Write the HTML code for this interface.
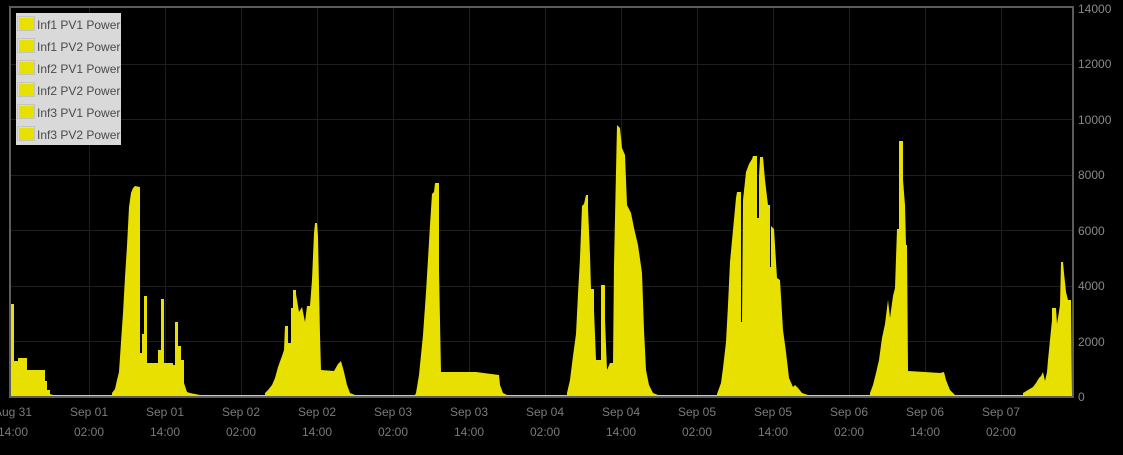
<!DOCTYPE html>
<html><head><meta charset="utf-8"><style>
html,body{margin:0;padding:0;background:#000;width:1123px;height:455px;overflow:hidden}
svg text{font-family:"Liberation Sans",sans-serif;font-size:12px}
</style></head><body>
<svg width="1123" height="455" viewBox="0 0 1123 455" xmlns="http://www.w3.org/2000/svg">
<g stroke="#1e1e1e" stroke-width="1">
<line x1="10" y1="341.5" x2="1072" y2="341.5"/><line x1="10" y1="286.5" x2="1072" y2="286.5"/>
<line x1="10" y1="230.5" x2="1072" y2="230.5"/><line x1="10" y1="175.5" x2="1072" y2="175.5"/>
<line x1="10" y1="119.5" x2="1072" y2="119.5"/><line x1="10" y1="64.5" x2="1072" y2="64.5"/>
<line x1="89.5" y1="7" x2="89.5" y2="396"/><line x1="165.5" y1="7" x2="165.5" y2="396"/>
<line x1="241.5" y1="7" x2="241.5" y2="396"/><line x1="317.5" y1="7" x2="317.5" y2="396"/>
<line x1="393.5" y1="7" x2="393.5" y2="396"/><line x1="469.5" y1="7" x2="469.5" y2="396"/>
<line x1="545.5" y1="7" x2="545.5" y2="396"/><line x1="621.5" y1="7" x2="621.5" y2="396"/>
<line x1="697.5" y1="7" x2="697.5" y2="396"/><line x1="773.5" y1="7" x2="773.5" y2="396"/>
<line x1="849.5" y1="7" x2="849.5" y2="396"/><line x1="925.5" y1="7" x2="925.5" y2="396"/>
<line x1="1001.5" y1="7" x2="1001.5" y2="396"/>
</g>
<path fill="#e8e000" d="M10,396 L10,326 L11,326 L11,304 L14,304 L14,361 L18,361 L18,358 L27,358 L27,370 L45,370 L45,381 L47,381 L47,390 L50,390 L50,394 L53,395
L112,395 L112,393 L115,389 L117,380 L119,372 L121,342 L123,313 L125,277 L127,246 L129,207 L131,193 L133,188 L135,186 L140,187 L140,353 L142,353 L142,334 L144,334 L144,296 L147,296 L147,363 L158,363 L158,350 L161,350 L161,299 L164,299 L164,363 L173,363 L173,365 L175,365 L175,322 L178,322 L178,346 L181,346 L181,360 L184,360 L184,383 L187,392 L190,393 L200,395
L265,395 L265,393 L268,390 L272,385 L275,378 L278,367 L282,356 L284,350 L285,326 L288,326 L288,343 L291,343 L291,308 L293,308 L293,290 L296,290 L296,294 L299,312 L302,307 L305,322 L307,306 L310,306 L312,280 L314,233 L315,223 L317,223 L318,236 L320,335 L321,370 L334,371 L338,364 L341,361 L344,372 L347,385 L350,393 L355,395
L415,395 L416,393 L419,375 L421,355 L423,335 L426,292 L428,259 L430,225 L432,194 L434,192 L435,183 L439,183 L439,270 L441,372 L476,372 L499,375 L500,385 L503,393 L507,395
L567,395 L567,393 L570,380 L573,356 L576,334 L578,294 L580,258 L582,206 L584,204 L586,195 L588,195 L588,208 L590,255 L591,289 L594,289 L594,310 L596,360 L601,360 L601,285 L605,285 L605,320 L607,370 L610,363 L613,363 L614,265 L617,125 L620,128 L622,148 L625,155 L627,205 L631,213 L634,228 L638,245 L642,273 L644,330 L646,370 L649,385 L653,393 L658,395
L717,395 L717,394 L721,383 L723,368 L726,342 L728,305 L730,262 L733,230 L736,198 L737,192 L741,192 L741,322 L742,322 L743,200 L746,172 L749,164 L752,159 L753,156 L757,156 L757,218 L759,218 L759,176 L760,157 L763,157 L765,180 L768,205 L770,205 L770,267 L771,267 L771,226 L774,229 L777,278 L780,280 L783,330 L786,352 L789,378 L793,387 L795,385 L798,388 L802,393 L808,395
L870,395 L870,393 L873,385 L876,373 L879,360 L882,338 L885,324 L888,300 L890,318 L893,296 L895,288 L897,229 L899,229 L899,141 L903,141 L903,180 L905,205 L906,245 L907,245 L908,371 L925,372 L940,373 L944,372 L946,380 L950,390 L955,395
L1023,395 L1023,393 L1028,390 L1033,387 L1036,383 L1039,378 L1041,376 L1043,372 L1045,381 L1047,372 L1048,360 L1050,340 L1052,320 L1052,308 L1056,308 L1057,324 L1060,305 L1061,262 L1063,262 L1064,273 L1066,292 L1068,300 L1071,300 L1072,396 Z"/>
<g fill="none" stroke="#5c5c5c" stroke-width="2">
<rect x="10" y="7" width="1063" height="390"/>
</g>
<g fill="#888">
<text x="1078" y="13">14000</text><text x="1078" y="68">12000</text>
<text x="1078" y="124">10000</text><text x="1078" y="179">8000</text>
<text x="1078" y="235">6000</text><text x="1078" y="290">4000</text>
<text x="1078" y="346">2000</text><text x="1078" y="401">0</text>
</g>
<g fill="#7a7a7a" text-anchor="middle">
<text x="13" y="416">Aug 31</text><text x="13" y="436">14:00</text>
<text x="89" y="416">Sep 01</text><text x="89" y="436">02:00</text>
<text x="165" y="416">Sep 01</text><text x="165" y="436">14:00</text>
<text x="241" y="416">Sep 02</text><text x="241" y="436">02:00</text>
<text x="317" y="416">Sep 02</text><text x="317" y="436">14:00</text>
<text x="393" y="416">Sep 03</text><text x="393" y="436">02:00</text>
<text x="469" y="416">Sep 03</text><text x="469" y="436">14:00</text>
<text x="545" y="416">Sep 04</text><text x="545" y="436">02:00</text>
<text x="621" y="416">Sep 04</text><text x="621" y="436">14:00</text>
<text x="697" y="416">Sep 05</text><text x="697" y="436">02:00</text>
<text x="773" y="416">Sep 05</text><text x="773" y="436">14:00</text>
<text x="849" y="416">Sep 06</text><text x="849" y="436">02:00</text>
<text x="925" y="416">Sep 06</text><text x="925" y="436">14:00</text>
<text x="1001" y="416">Sep 07</text><text x="1001" y="436">02:00</text>
</g>
<rect x="16" y="13" width="105" height="132" fill="#d9d9d9"/>
<g>
<rect x="17.5" y="16.5" width="17" height="14" fill="none" stroke="#c4c4c4"/><rect x="19" y="18" width="15" height="12" fill="#e8e000"/>
<rect x="17.5" y="38.5" width="17" height="14" fill="none" stroke="#c4c4c4"/><rect x="19" y="40" width="15" height="12" fill="#e8e000"/>
<rect x="17.5" y="60.5" width="17" height="14" fill="none" stroke="#c4c4c4"/><rect x="19" y="62" width="15" height="12" fill="#e8e000"/>
<rect x="17.5" y="82.5" width="17" height="14" fill="none" stroke="#c4c4c4"/><rect x="19" y="84" width="15" height="12" fill="#e8e000"/>
<rect x="17.5" y="104.5" width="17" height="14" fill="none" stroke="#c4c4c4"/><rect x="19" y="106" width="15" height="12" fill="#e8e000"/>
<rect x="17.5" y="126.5" width="17" height="14" fill="none" stroke="#c4c4c4"/><rect x="19" y="128" width="15" height="12" fill="#e8e000"/>
</g>
<g fill="#4a4a4a">
<text x="37" y="29">Inf1 PV1 Power</text><text x="37" y="51">Inf1 PV2 Power</text>
<text x="37" y="73">Inf2 PV1 Power</text><text x="37" y="95">Inf2 PV2 Power</text>
<text x="37" y="117">Inf3 PV1 Power</text><text x="37" y="139">Inf3 PV2 Power</text>
</g>
</svg>
</body></html>
